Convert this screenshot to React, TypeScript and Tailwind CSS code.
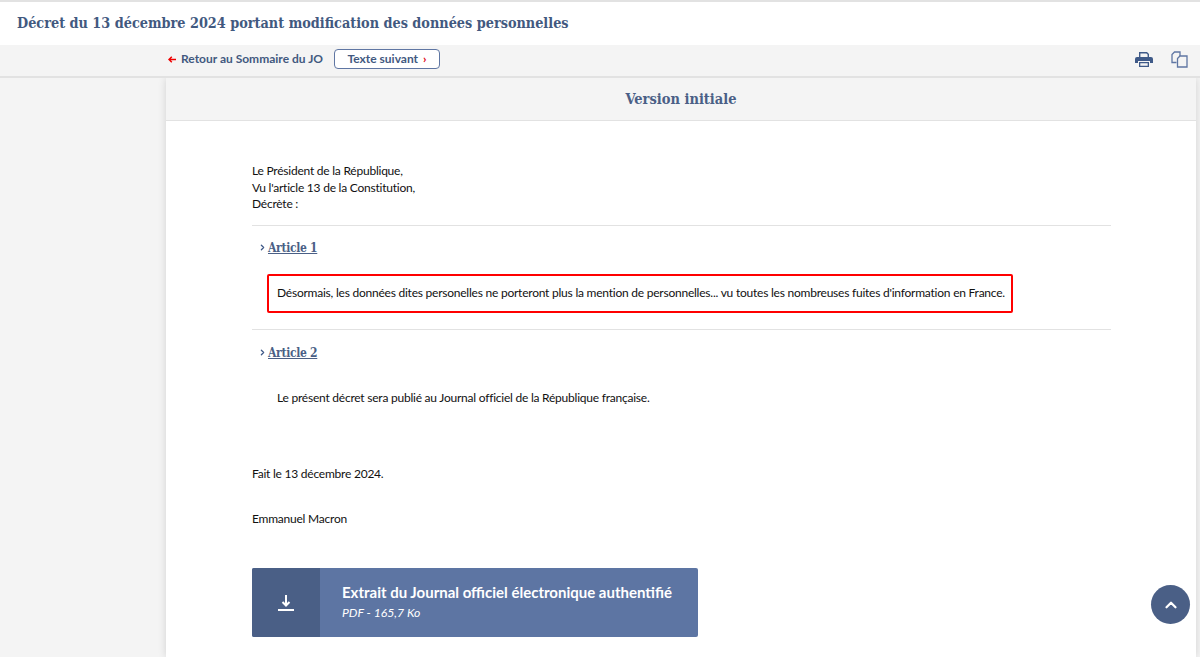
import { ChevronRight, ChevronUp } from 'lucide-react';

const slab = "font-['DejaVu_Serif_Condensed','DejaVu_Serif',serif]";
const body = "font-['Lato','Open_Sans',sans-serif]";

function PrintIcon() {
  return (
    <svg width="18" height="16" viewBox="0 0 18 16" className="text-[#3f5a88]">
      <path fill="currentColor" d="M4 1h8l2 2v3h-1.400V3.600L11.400 2.400H5.400V6H4zM2 6h14a2 2 0 0 1 2 2v4h-3v-2H3v2H0V8a2 2 0 0 1 2-2z" />
      <path fill="currentColor" d="M4 11h10v5H4zm1.300 1.200v2.600h7.400v-2.600z" />
    </svg>
  );
}

function CopyIcon() {
  return (
    <svg width="17" height="17" viewBox="0 0 17 17" fill="none" stroke="#5f76a3" strokeWidth="1.300">
      <path d="M5.500 11.500H1V3.500L3.500 1H9v4" />
      <path d="M6.500 7.500L9 5h7v11H6.500z" />
    </svg>
  );
}

function DownloadIcon() {
  return (
    <svg width="16" height="17" viewBox="0 0 16 17" fill="none" stroke="white" strokeWidth="2">
      <path d="M8 1v10M4.500 8L8 11.500 11.500 8" />
      <path d="M0 16h16" />
    </svg>
  );
}

function ArticleTitle({ label }: { label: string }) {
  return (
    <div className="flex items-center pl-[6px] h-[16px]">
      <ChevronRight size={9} strokeWidth={3.500} className="text-[#3f5a88] -mt-[3px]" />
      <a className={`${slab} ml-[1px] text-[12px] tracking-[-0.300px] font-bold text-[#4a5f86] underline`}>{label}</a>
    </div>
  );
}

export default function App() {
  return (
    <div className={`${body} w-[1200px] h-[657px] overflow-hidden bg-[#f4f4f4] relative`}>
      <div className="h-[2px] bg-[#e2e2e2]"></div>
      <div className="h-[43px] bg-white flex items-center pl-[17px]">
        <h1 className={`${slab} text-[14.300px] font-bold text-[#42597f]`}>
          Décret du 13 décembre 2024 portant modification des données personnelles
        </h1>
      </div>

      <div className="relative z-10 h-[33px] bg-[#f4f4f4] border-b-2 border-[#e2e2e2] flex items-center pl-[168px] pr-[12px] pb-[3px]">
        <svg width="8" height="7" viewBox="0 0 8 7" fill="none" stroke="#f00000" strokeWidth="1.500" className="mr-[5px]">
          <path d="M8 3.500H1M3.800 0.700L1 3.500l2.800 2.800" />
        </svg>
        <span className="text-[12px] font-bold text-[#42597f] mr-[11px]">Retour au Sommaire du JO</span>
        <button className="h-[20px] w-[106px] rounded-[4px] border border-[#5f76a3] bg-white text-[12px] font-bold text-[#42597f]">
          Texte suivant <span className="text-[#e1000f] ml-[2px]">›</span>
        </button>
        <div className="ml-auto flex items-center gap-[18px]">
          <PrintIcon />
          <CopyIcon />
        </div>
      </div>

      <div className="ml-[166px] mr-[4px] bg-white h-[579px] shadow-[0_0_8px_rgba(0,0,0,0.14)]">
        <div className={`${slab} h-[43px] bg-[#f4f4f4] border-b border-[#e2e2e2] flex items-center justify-center text-[14.500px] font-bold text-[#4a5f86]`}>
          Version initiale
        </div>

        <div className="pl-[86px] pr-[85px] pt-[42px] text-[12px] tracking-[-0.230px] leading-[16.500px] text-[#111]">
          <p>Le Président de la République,</p>
          <p>Vu l'article 13 de la Constitution,</p>
          <p>Décrète :</p>

          <div className="mt-[12px] border-t border-[#e2e2e2] pt-[15px]">
            <ArticleTitle label="Article 1" />
            <div className="mt-[17px] ml-[15px] w-[746px] h-[39px] rounded-[2px] border-2 border-[#ff0000] flex items-center pl-[8px]">
              Désormais, les données dites personelles ne porteront plus la mention de personnelles... vu toutes les nombreuses fuites d'information en France.
            </div>
          </div>

          <div className="mt-[16px] border-t border-[#e2e2e2] pt-[16px]">
            <ArticleTitle label="Article 2" />
            <p className="mt-[28px] pl-[25px]">Le présent décret sera publié au Journal officiel de la République française.</p>
          </div>

          <p className="mt-[60px]">Fait le 13 décembre 2024.</p>
          <p className="mt-[28px]">Emmanuel Macron</p>

          <a className="mt-[41px] flex w-[446px] h-[69px] rounded-[2px] overflow-hidden bg-[#5d75a3] text-white tracking-normal">
            <span className="w-[68px] bg-[#4a5f86] flex items-center justify-center">
              <DownloadIcon />
            </span>
            <span className="pl-[22px] flex flex-col justify-center">
              <span className="text-[15px] font-bold leading-[20px]">Extrait du Journal officiel électronique authentifié</span>
              <span className="text-[12.200px] italic leading-[20px] mt-[1px]">PDF - 165,7 Ko</span>
            </span>
          </a>
        </div>
      </div>

      <button className="absolute left-[1151px] top-[585px] w-[39px] h-[39px] rounded-full bg-[#4a5f86] flex items-center justify-center">
        <ChevronUp size={18} strokeWidth={3} className="text-white" />
      </button>
    </div>
  );
}
